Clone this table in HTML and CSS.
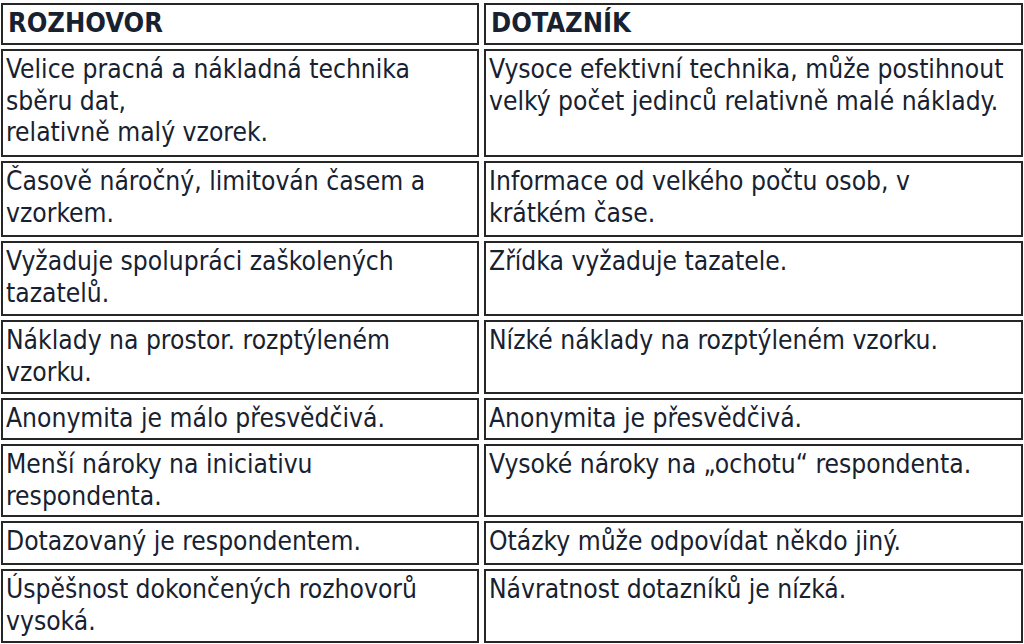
FILE: index.html
```html
<!DOCTYPE html>
<html lang="cs">
<head>
<meta charset="utf-8">
<link rel="stylesheet" href="styles.css">
</head>
<body>
<div class="grid">
  <div class="cell head">ROZHOVOR</div>
  <div class="cell head">DOTAZNÍK</div>
  <div class="cell">Velice pracná a nákladná technika<br>sběru dat,<br>relativně malý vzorek.</div>
  <div class="cell">Vysoce efektivní technika, může postihnout velký počet jedinců relativně malé náklady.</div>
  <div class="cell">Časově náročný, limitován časem a vzorkem.</div>
  <div class="cell">Informace od velkého počtu osob, v<br>krátkém čase.</div>
  <div class="cell">Vyžaduje spolupráci zaškolených tazatelů.</div>
  <div class="cell">Zřídka vyžaduje tazatele.</div>
  <div class="cell">Náklady na prostor. rozptýleném vzorku.</div>
  <div class="cell">Nízké náklady na rozptýleném vzorku.</div>
  <div class="cell">Anonymita je málo přesvědčivá.</div>
  <div class="cell">Anonymita je přesvědčivá.</div>
  <div class="cell">Menší nároky na iniciativu respondenta.</div>
  <div class="cell">Vysoké nároky na „ochotu“ respondenta.</div>
  <div class="cell">Dotazovaný je respondentem.</div>
  <div class="cell">Otázky může odpovídat někdo jiný.</div>
  <div class="cell">Úspěšnost dokončených rozhovorů vysoká.</div>
  <div class="cell">Návratnost dotazníků je nízká.</div>
</div>
</body>
</html>
```
FILE: styles.css
```css
html, body {
  margin: 0;
  padding: 0;
  background: #ffffff;
}
body {
  width: 1024px;
  height: 644px;
  overflow: hidden;
}
.grid {
  display: grid;
  grid-template-columns: 478px 539px;
  grid-template-rows: 42px 108px 76px 75px 74px 42px 73px 44px 74px;
  column-gap: 5px;
  row-gap: 4px;
  padding: 3px 0 0 1px;
}
.cell {
  box-sizing: border-box;
  border: 2px solid #262626;
  padding: 3px 4px 0 3px;
  font-family: "DejaVu Sans Condensed", "DejaVu Sans", sans-serif;
  font-size: 26.2px;
  line-height: 31.5px;
  color: #17212f;
}
.head {
  font-weight: bold;
  font-size: 27px;
  padding-top: 2px;
  padding-left: 5px;
}
```
